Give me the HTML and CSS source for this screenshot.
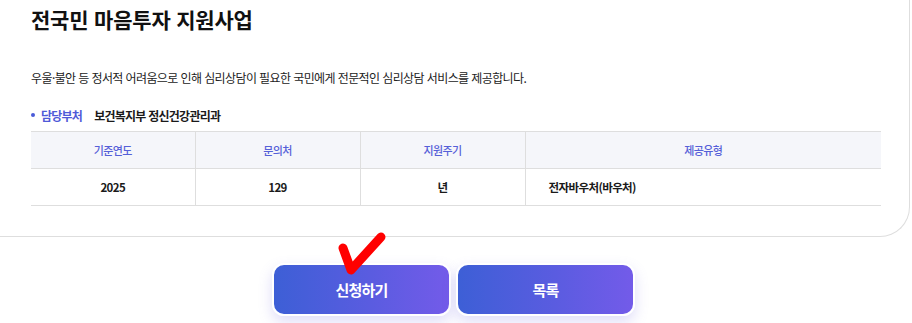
FILE: index.html
```html
<!DOCTYPE html>
<html lang="ko">
<head>
<meta charset="utf-8">
<title>전국민 마음투자 지원사업</title>
<link rel="stylesheet" href="styles.css">
</head>
<body>
<section class="card">
  <h1 class="title">전국민 마음투자 지원사업</h1>
  <p class="desc">우울·불안 등 정서적 어려움으로 인해 심리상담이 필요한 국민에게 전문적인 심리상담 서비스를 제공합니다.</p>
  <div class="dept">
    <span class="dot"></span>
    <span class="dept-label">담당부처</span>
    <span class="dept-value">보건복지부 정신건강관리과</span>
  </div>
  <table class="info">
    <thead>
      <tr>
        <th class="c1">기준연도</th>
        <th class="c2">문의처</th>
        <th class="c3">지원주기</th>
        <th class="c4">제공유형</th>
      </tr>
    </thead>
    <tbody>
      <tr>
        <td>2025</td>
        <td>129</td>
        <td>년</td>
        <td class="left">전자바우처(바우처)</td>
      </tr>
    </tbody>
  </table>
</section>
<div class="actions">
  <button class="btn" type="button">신청하기</button>
  <button class="btn" type="button">목록</button>
  <svg class="check" width="56" height="50" viewBox="0 0 56 50" aria-hidden="true">
    <path d="M8 19 L16 41 L46 8" fill="none" stroke="#ff0000" stroke-width="9" stroke-linecap="round" stroke-linejoin="round"/>
  </svg>
</div>
</body>
</html>
```
FILE: styles.css
```css
* { box-sizing: border-box; }
html, body {
  margin: 0;
  padding: 0;
  background: #ffffff;
  overflow: hidden;
}
body {
  font-family: "Noto Sans CJK KR", "Noto Sans", sans-serif;
  color: #1a1a1a;
  width: 912px;
  height: 323px;
}
.card {
  margin: 0 2px 0 -28px;
  padding: 5px 29px 30px 58px;
  border: 1px solid #dedede;
  border-top: none;
  border-radius: 0 0 30px 30px;
  background: #fff;
}
.title {
  margin: 0;
  font-size: 21px;
  line-height: 28px;
  font-weight: 700;
  letter-spacing: -0.2px;
  color: #111;
}
.desc {
  margin: 35px 0 0;
  font-size: 12px;
  line-height: 20px;
  letter-spacing: -0.6px;
  color: #222;
}
.dept {
  display: flex;
  align-items: center;
  margin-top: 17px;
  height: 20px;
  font-size: 12px;
  font-weight: 700;
  letter-spacing: -0.75px;
}
.dot {
  width: 4px;
  height: 4px;
  border-radius: 50%;
  background: #4a5bd8;
  margin: 0 6px 0 0;
}
.dept-label {
  color: #4f5ad8;
  margin-right: 12px;
}
.dept-value { color: #1a1a1a; }
.info {
  margin-top: 6px;
  width: 850px;
  border-collapse: collapse;
  table-layout: fixed;
  font-size: 11px;
}
.info th, .info td {
  height: 37px;
  padding: 0;
  text-align: center;
  border-top: 1px solid #dedede;
  border-bottom: 1px solid #dedede;
  border-left: 1px solid #dedede;
  letter-spacing: -0.6px;
}
.info th:first-child, .info td:first-child { border-left: none; }
.info th {
  background: #f5f6fa;
  color: #5560d8;
  font-weight: 500;
}
.info td {
  color: #1a1a1a;
  font-weight: 700;
  font-size: 11.5px;
}
.info td.left {
  text-align: left;
  padding-left: 23px;
}
.c1 { width: 164px; }
.c2 { width: 165px; }
.c3 { width: 165px; }
.c4 { width: 356px; }
.actions {
  position: relative;
  display: flex;
  justify-content: center;
  gap: 5px;
  margin-top: 26px;
  padding-right: 5px;
}
.btn {
  width: 179px;
  height: 53px;
  border: 2px solid #fff;
  border-radius: 12px;
  background: linear-gradient(90deg, #3d5fd6 0%, #5a5ce0 55%, #735be9 100%);
  color: #fff;
  font-family: "Noto Sans CJK KR", "Noto Sans", sans-serif;
  font-size: 15px;
  font-weight: 700;
  letter-spacing: -0.8px;
  box-shadow: 0 6px 14px rgba(110, 100, 225, 0.22);
  cursor: pointer;
}
.check {
  position: absolute;
  left: 335px;
  top: -34px;
}
```
